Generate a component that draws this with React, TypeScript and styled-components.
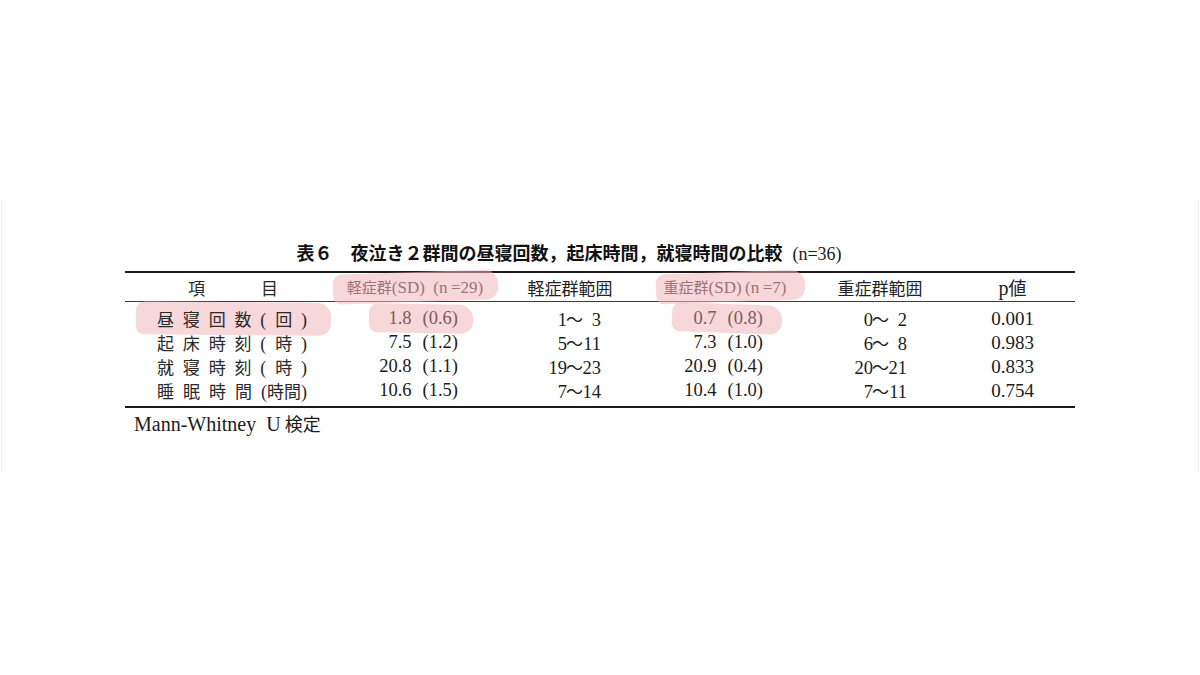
import React from 'react';
import styled, { createGlobalStyle } from 'styled-components';

type Row = {
  label: string[];
  mildMean: string;
  mildSd: string;
  mildRange: [string, string];
  severeMean: string;
  severeSd: string;
  severeRange: [string, string];
  p: string;
  marked?: boolean;
};

const rows: Row[] = [
  {
    label: ['昼', '寝', '回', '数', '(', '回', ')'],
    mildMean: '1.8',
    mildSd: '(0.6)',
    mildRange: ['1', '3'],
    severeMean: '0.7',
    severeSd: '(0.8)',
    severeRange: ['0', '2'],
    p: '0.001',
    marked: true,
  },
  {
    label: ['起', '床', '時', '刻', '(', '時', ')'],
    mildMean: '7.5',
    mildSd: '(1.2)',
    mildRange: ['5', '11'],
    severeMean: '7.3',
    severeSd: '(1.0)',
    severeRange: ['6', '8'],
    p: '0.983',
  },
  {
    label: ['就', '寝', '時', '刻', '(', '時', ')'],
    mildMean: '20.8',
    mildSd: '(1.1)',
    mildRange: ['19', '23'],
    severeMean: '20.9',
    severeSd: '(0.4)',
    severeRange: ['20', '21'],
    p: '0.833',
  },
  {
    label: ['睡', '眠', '時', '間', '(時間)'],
    mildMean: '10.6',
    mildSd: '(1.5)',
    mildRange: ['7', '14'],
    severeMean: '10.4',
    severeSd: '(1.0)',
    severeRange: ['7', '11'],
    p: '0.754',
  },
];

const GlobalStyle = createGlobalStyle`
  html, body {
    margin: 0;
    padding: 0;
    background: #ffffff;
  }
  body {
    font-family: "Liberation Serif", "Noto Sans CJK JP", serif;
    color: #1c1c1c;
  }
`;

const Page = styled.div`
  width: 1200px;
  height: 675px;
  padding-top: 200px;
  box-sizing: border-box;
`;

// the scanned figure sits on the slide with a faint edge
const Frame = styled.div`
  height: 272px;
  border-left: 1px solid #eeeeee;
  border-right: 1px solid #eeeeee;
  margin: 0 1px;
  padding-top: 41px;
  box-sizing: border-box;
`;

const Caption = styled.div`
  text-align: center;
  padding-right: 62px;
  height: 22px;
  line-height: 22px;
  margin-bottom: 8px;
  white-space: nowrap;
`;

const CaptionMain = styled.span`
  font-family: "Noto Sans CJK JP", sans-serif;
  font-weight: 700;
  font-size: 18px;
  color: #111;
`;

const CaptionN = styled.span`
  font-size: 18px;
  margin-left: 10px;
`;

const Table = styled.div`
  width: 950px;
  margin: 0 auto;
  border-top: 2px solid #1a1a1a;
  border-bottom: 2px solid #1a1a1a;
`;

const Grid = styled.div`
  display: grid;
  grid-template-columns: 205px 170px 140px 170px 140px 125px;
`;

const HeadRow = styled(Grid)`
  height: 28px;
  align-items: center;
  border-bottom: 1px solid #3a3a3a;
`;

const Body = styled.div`
  padding: 4px 0;
`;

const BodyRow = styled(Grid)`
  height: 24px;
  align-items: center;
`;

const HeadCell = styled.div<{ $size?: number }>`
  text-align: center;
  font-size: ${(p) => p.$size ?? 17}px;
  white-space: nowrap;
  color: #222;
`;

const Cjk = styled.span<{ $size?: number }>`
  font-family: "Noto Sans CJK JP", sans-serif;
  font-size: ${(p) => p.$size ?? 17}px;
  color: inherit;
`;

const Spread = styled.div<{ $width: number; $left: number }>`
  display: flex;
  justify-content: space-between;
  align-items: baseline;
  width: ${(p) => p.$width}px;
  margin-left: ${(p) => p.$left}px;
`;

const SpreadItem = styled.span<{ $latin?: boolean }>`
  font-family: ${(p) =>
    p.$latin ? '"Liberation Serif", "Noto Sans CJK JP", serif' : '"Noto Sans CJK JP", sans-serif'};
  font-size: ${(p) => (p.$latin ? 18 : 17)}px;
  color: #2a2a2a;
`;

const LabelCell = styled.div`
  display: flex;
  padding-left: 32px;
`;

const ValueCell = styled.div<{ $right: number }>`
  display: flex;
  justify-content: flex-end;
  align-items: baseline;
  padding-right: ${(p) => p.$right}px;
  font-size: 18.5px;
  white-space: nowrap;
`;

const Mean = styled.span`
  display: inline-block;
  width: 40px;
  text-align: right;
`;

const Sd = styled.span`
  margin-left: 11px;
`;

const RangeNum = styled.span`
  display: inline-block;
  width: 19px;
  text-align: right;
`;

const Tilde = styled.span`
  font-family: "Noto Sans CJK JP", sans-serif;
  font-size: 17px;
  margin: 0 -1px;
`;

const PCell = styled.div`
  text-align: center;
  font-size: 19px;
`;

// pink highlighter strokes drawn over the scan
const Marker = styled.span<{ $l: number; $r: number; $tilt?: number; $tone?: string }>`
  position: relative;
  isolation: isolate;
  display: inline-flex;
  align-items: baseline;
  padding: 0 ${(p) => p.$r}px 0 ${(p) => p.$l}px;
  margin: 0 -${(p) => p.$r}px 0 -${(p) => p.$l}px;
  color: ${(p) => p.$tone ?? '#7d5a5f'};
  &::before {
    content: '';
    position: absolute;
    left: 0;
    right: 0;
    top: -4px;
    bottom: -4px;
    border-radius: 9px 14px 12px 8px;
    background: rgba(242, 182, 190, 0.55);
    transform: rotate(${(p) => p.$tilt ?? 0}deg);
    z-index: -1;
  }
`;

const Footnote = styled.div`
  width: 950px;
  margin: 4px auto 0;
  padding-left: 9px;
  box-sizing: border-box;
  height: 22px;
  line-height: 22px;
  font-size: 20px;
  color: #1c1c1c;
  white-space: nowrap;
`;

const Range: React.FC<{ value: [string, string] }> = ({ value }) => (
  <>
    <RangeNum>{value[0]}</RangeNum>
    <Tilde>〜</Tilde>
    <RangeNum>{value[1]}</RangeNum>
  </>
);

const Label: React.FC<{ parts: string[] }> = ({ parts }) => (
  <Spread $width={150} $left={0}>
    {parts.map((part, i) => (
      <SpreadItem key={i} $latin={/[()]/.test(part) && part.length === 1}>
        {part === '(時間)' ? (
          <>
            <SpreadItem $latin>(</SpreadItem>時間<SpreadItem $latin>)</SpreadItem>
          </>
        ) : (
          part
        )}
      </SpreadItem>
    ))}
  </Spread>
);

const App: React.FC = () => {
  return (
    <Page>
      <GlobalStyle />
      <Frame>
        <Caption>
          <CaptionMain>表６　夜泣き２群間の昼寝回数，起床時間，就寝時間の比較</CaptionMain>
          <CaptionN>(n=36)</CaptionN>
        </Caption>
        <Table>
          <HeadRow>
            <HeadCell>
              <Spread $width={90} $left={63}>
                <SpreadItem>項</SpreadItem>
                <SpreadItem>目</SpreadItem>
              </Spread>
            </HeadCell>
            <HeadCell $size={17}>
              <Marker $l={14} $r={15} $tilt={-2} $tone="#9b7378">
                <Cjk $size={15}>軽症群</Cjk>(SD)&ensp;(n&thinsp;=29)
              </Marker>
            </HeadCell>
            <HeadCell>
              <Cjk>軽症群範囲</Cjk>
            </HeadCell>
            <HeadCell $size={17}>
              <Marker $l={8} $r={18} $tilt={-2} $tone="#9b7378">
                <Cjk $size={15}>重症群</Cjk>(SD)&thinsp;(n&thinsp;=7)
              </Marker>
            </HeadCell>
            <HeadCell>
              <Cjk>重症群範囲</Cjk>
            </HeadCell>
            <HeadCell $size={20}>
              p<Cjk $size={18}>値</Cjk>
            </HeadCell>
          </HeadRow>
          <Body>
            {rows.map((row) => (
              <BodyRow key={row.label.join('')}>
                <LabelCell>
                  {row.marked ? (
                    <Marker $l={21} $r={24} $tilt={0.5}>
                      <Label parts={row.label} />
                    </Marker>
                  ) : (
                    <Label parts={row.label} />
                  )}
                </LabelCell>
                <ValueCell $right={42}>
                  {row.marked ? (
                    <Marker $l={3} $r={15} $tilt={1}>
                      <Mean>{row.mildMean}</Mean>
                      <Sd>{row.mildSd}</Sd>
                    </Marker>
                  ) : (
                    <>
                      <Mean>{row.mildMean}</Mean>
                      <Sd>{row.mildSd}</Sd>
                    </>
                  )}
                </ValueCell>
                <ValueCell $right={39}>
                  <Range value={row.mildRange} />
                </ValueCell>
                <ValueCell $right={47}>
                  {row.marked ? (
                    <Marker $l={5} $r={19} $tilt={2}>
                      <Mean>{row.severeMean}</Mean>
                      <Sd>{row.severeSd}</Sd>
                    </Marker>
                  ) : (
                    <>
                      <Mean>{row.severeMean}</Mean>
                      <Sd>{row.severeSd}</Sd>
                    </>
                  )}
                </ValueCell>
                <ValueCell $right={43}>
                  <Range value={row.severeRange} />
                </ValueCell>
                <PCell>{row.p}</PCell>
              </BodyRow>
            ))}
          </Body>
        </Table>
        <Footnote>
          Mann-Whitney&ensp;U<Cjk $size={18}> 検定</Cjk>
        </Footnote>
      </Frame>
    </Page>
  );
};

export default App;
